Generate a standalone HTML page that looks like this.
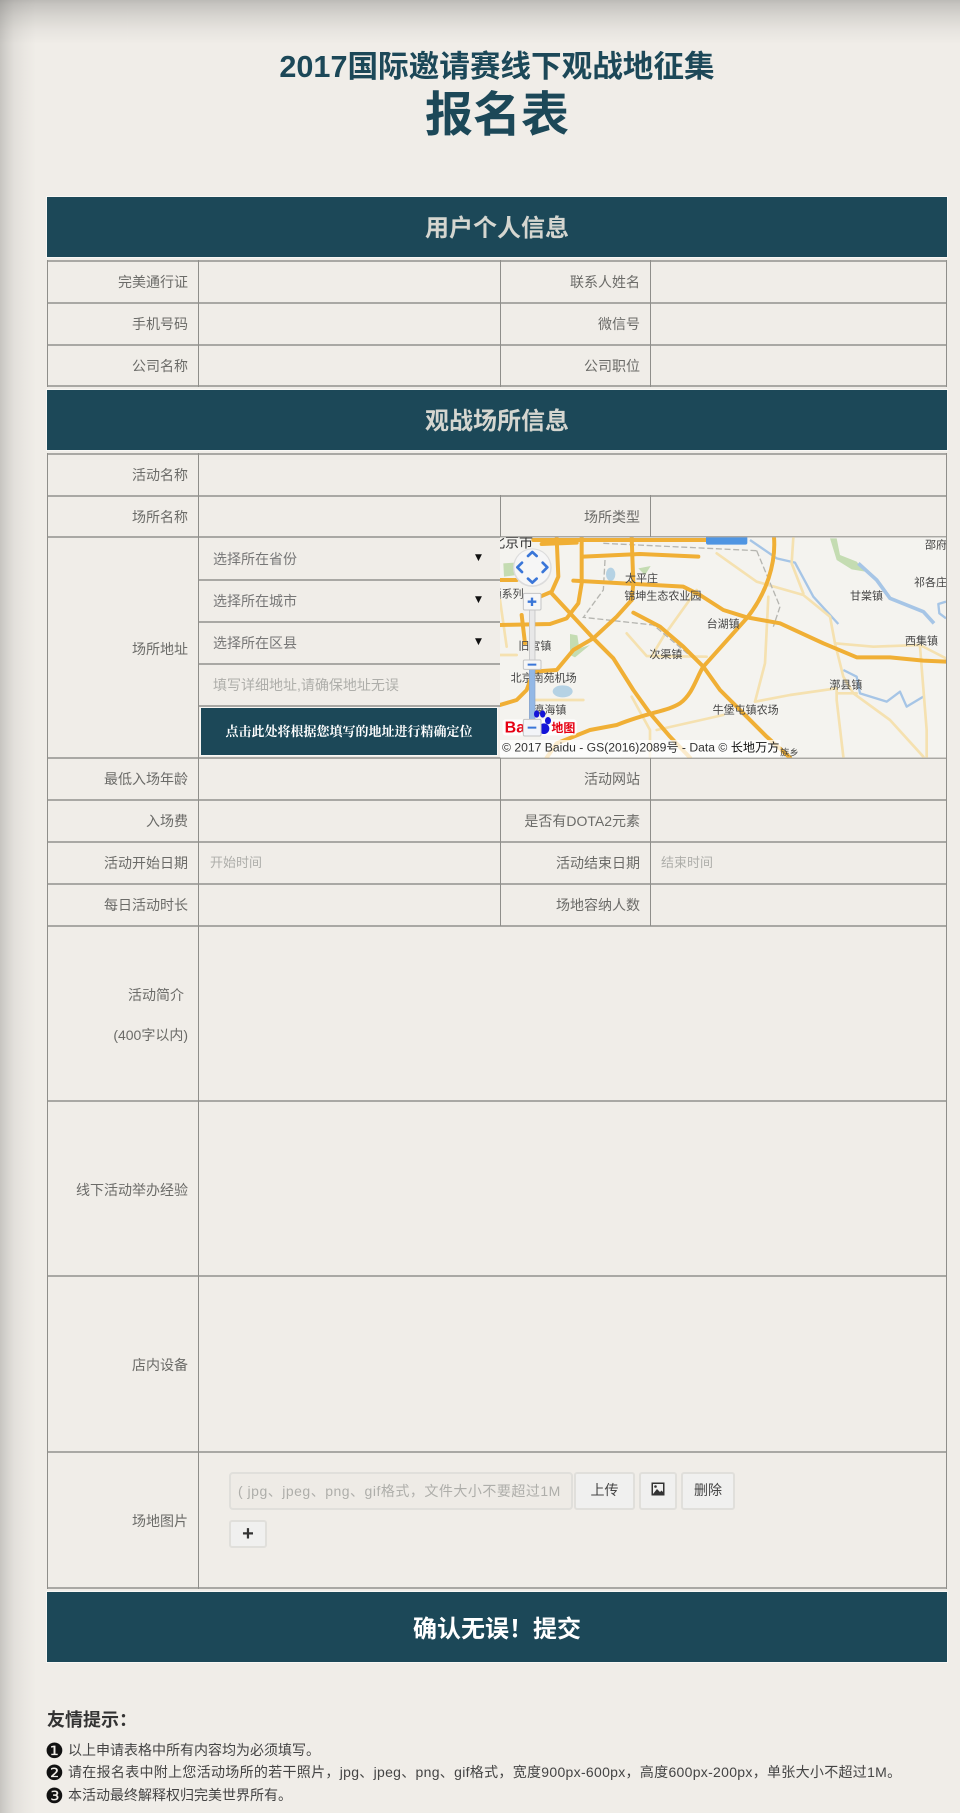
<!DOCTYPE html>
<html lang="zh-CN">
<head>
<meta charset="utf-8">
<title>报名表</title>
<style>
html,body{margin:0;padding:0;background:#f0ede8}
body{width:960px;height:1813px;position:relative;overflow:hidden;font-family:"Liberation Sans","Noto Sans CJK SC",sans-serif;color:#666}
#w{position:absolute;left:0;top:0;width:960px;height:1813px;overflow:hidden;background:#f0ede8;filter:blur(.35px)}
.shT{position:absolute;left:0;top:0;width:960px;height:44px;background:linear-gradient(rgba(110,110,108,.4) 0,rgba(110,110,108,.32) 4px,rgba(110,110,108,.19) 16px,rgba(110,110,108,.07) 30px,rgba(110,110,108,0) 44px)}
.shL{position:absolute;left:0;top:0;width:36px;height:1813px;background:linear-gradient(90deg,rgba(110,110,108,.32) 0,rgba(110,110,108,.22) 6px,rgba(110,110,108,.11) 14px,rgba(110,110,108,.05) 24px,rgba(110,110,108,0) 36px)}
.t{position:absolute;white-space:nowrap}
.bar{position:absolute;left:47px;width:900px;background:#1c4858;box-shadow:0 0 0 1px #f8f7f4;text-align:center;font-weight:bold}
.h{position:absolute;left:47px;width:900px;height:2px;background:#a9a8a4}
.hi{position:absolute;left:198px;width:302px;height:2px;background:#a9a8a4}
.v{position:absolute;width:1px;background:#8f8e8a}
.lb{position:absolute;height:20px;line-height:20px;font-size:14px;color:#6b6b68;text-align:right;white-space:nowrap}
.a{left:47px;width:141px}
.b{left:500px;width:140px}
.sel{position:absolute;left:213px;font-size:14px;line-height:20px;height:20px;color:#777;white-space:nowrap}
.ar{position:absolute;left:475px;font-size:9px;line-height:12px;color:#111;font-family:"DejaVu Sans",sans-serif}
.ph{position:absolute;font-size:13px;line-height:20px;color:#aeaeaa;white-space:nowrap}
.btn{position:absolute;box-sizing:border-box;background:#f0f0ef;border:2px solid #e0dfdb;border-radius:3px;text-align:center;font-size:14px;color:#444;line-height:33px}
.tip{position:absolute;left:68px;font-size:14px;line-height:20px;height:20px;color:#444;white-space:nowrap}
.n{position:absolute;left:45px;font-size:21px;line-height:20px;height:20px;color:#111;font-family:"DejaVu Sans",sans-serif}
svg text{font-family:"Liberation Sans","Noto Sans CJK SC",sans-serif}
</style>
</head>
<body>
<div id="w">
<div class="shT"></div>
<div class="shL"></div>

<div class="t" style="left:0;width:994px;top:47px;text-align:center;font-size:30.6px;line-height:40px;font-weight:bold;color:#1c4858">2017国际邀请赛线下观战地征集</div>
<div class="t" style="left:0;width:994px;top:86px;text-align:center;font-size:48px;line-height:60px;font-weight:bold;color:#1c4858">报名表</div>

<div class="bar" style="top:197px;height:60px;line-height:64px;font-size:24px;color:#d5d6d0">用户个人信息</div>

<div class="h" style="top:260px"></div>
<div class="h" style="top:302px"></div>
<div class="h" style="top:344px"></div>
<div class="h" style="top:385px"></div>
<div class="v" style="left:47px;top:260px;height:127px"></div>
<div class="v" style="left:198px;top:260px;height:127px"></div>
<div class="v" style="left:500px;top:260px;height:127px"></div>
<div class="v" style="left:650px;top:260px;height:127px"></div>
<div class="v" style="left:946px;top:260px;height:127px"></div>
<div class="lb a" style="top:272px">完美通行证</div>
<div class="lb b" style="top:272px">联系人姓名</div>
<div class="lb a" style="top:314px">手机号码</div>
<div class="lb b" style="top:314px">微信号</div>
<div class="lb a" style="top:356px">公司名称</div>
<div class="lb b" style="top:356px">公司职位</div>

<div class="bar" style="top:390px;height:60px;line-height:64px;font-size:24px;color:#d5d6d0">观战场所信息</div>

<div class="h" style="top:453px"></div>
<div class="h" style="top:495px"></div>
<div class="h" style="top:536px"></div>
<div class="hi" style="top:579px"></div>
<div class="hi" style="top:621px"></div>
<div class="hi" style="top:663px"></div>
<div class="hi" style="top:705px"></div>
<div class="h" style="top:757px"></div>
<div class="h" style="top:799px"></div>
<div class="h" style="top:841px"></div>
<div class="h" style="top:883px"></div>
<div class="h" style="top:925px"></div>
<div class="h" style="top:1100px"></div>
<div class="h" style="top:1275px"></div>
<div class="h" style="top:1451px"></div>
<div class="h" style="top:1587px"></div>
<div class="v" style="left:47px;top:453px;height:1136px"></div>
<div class="v" style="left:198px;top:453px;height:1136px"></div>
<div class="v" style="left:946px;top:453px;height:1136px"></div>
<div class="v" style="left:500px;top:495px;height:42px"></div>
<div class="v" style="left:650px;top:495px;height:42px"></div>
<div class="v" style="left:500px;top:757px;height:169px"></div>
<div class="v" style="left:650px;top:757px;height:169px"></div>

<div class="lb a" style="top:465px">活动名称</div>
<div class="lb a" style="top:507px">场所名称</div>
<div class="lb b" style="top:507px">场所类型</div>
<div class="lb a" style="top:639px">场所地址</div>

<div class="sel" style="top:549px">选择所在省份</div><div class="ar" style="top:552px">▼</div>
<div class="sel" style="top:591px">选择所在城市</div><div class="ar" style="top:594px">▼</div>
<div class="sel" style="top:633px">选择所在区县</div><div class="ar" style="top:636px">▼</div>
<div class="sel" style="top:675px;color:#aeaeaa">填写详细地址,请确保地址无误</div>

<div style="position:absolute;left:201px;top:708px;width:296px;height:47px;background:#1c4858;text-align:center;line-height:48px;font-size:13px;font-weight:bold;color:#fff;font-family:'Liberation Serif','Noto Serif CJK SC',serif;box-shadow:0 0 0 1px #f8f7f4">点击此处将根据您填写的地址进行精确定位</div>

<svg style="position:absolute;left:490px;top:530px" width="470" height="235" viewBox="0 0 1410 705">
<defs><clipPath id="c"><rect x="30" y="22" width="1338" height="661"/></clipPath></defs>
<g clip-path="url(#c)">
<rect x="30" y="22" width="1338" height="661" fill="#f4f3ef"/>
<g fill="#c4dcb2">
<path d="M1020 25 L1040 25 L1050 75 L1100 95 L1125 125 L1085 118 L1040 90 Z"/>
<path d="M240 312 L262 316 L268 355 L300 345 L255 382 L240 375 Z"/>
<path d="M445 115 L482 108 L465 135 Z"/>
<path d="M40 100 L75 98 L80 135 L42 140 Z"/>
</g>
<g fill="#b5d2e4">
<ellipse cx="362" cy="133" rx="14" ry="20"/>
<ellipse cx="218" cy="484" rx="30" ry="18"/>
</g>
<g fill="none" stroke="#a6c5e6" stroke-width="7" stroke-linejoin="round">
<path d="M780 30 L860 85 L915 98 L970 200 L1045 282"/>
<path d="M1105 100 L1160 150 L1200 205 L1300 245 L1332 280" stroke-width="11"/>
<path d="M1060 420 L1100 440 L1110 490 L1190 515 L1230 485 L1250 530 L1300 500"/>
<path d="M1368 265 L1348 250 L1345 222 L1368 215"/>
</g>
<g fill="none" stroke="#f5e1b0" stroke-width="8" stroke-linejoin="round" stroke-linecap="round">
<path d="M680 70 L800 155 L940 195 L1020 260 L1035 340 L1060 440 L1090 490 L1200 570 L1300 680"/>
<path d="M1035 340 L1150 350 L1290 345 L1368 385"/>
<path d="M1290 350 L1310 600 L1310 680"/>
<path d="M910 22 L905 100 L940 190"/>
<path d="M795 515 L825 400 L830 300 L835 200"/>
<path d="M795 515 L900 495 L1040 475 L1040 510 L1060 680"/>
<path d="M500 600 L700 555"/>
<path d="M620 180 L520 320 L490 370"/>
<path d="M410 310 L470 378 L650 380"/>
<path d="M130 510 L280 510"/>
<path d="M425 500 L480 600 L480 680"/>
<path d="M30 210 L50 350 M30 375 L80 375"/>
<path d="M1040 490 L1100 490"/>
</g>
<g fill="none" stroke="#b5b5b0" stroke-width="4" stroke-dasharray="18 8">
<path d="M340 40 L800 62"/>
<path d="M345 90 L340 180 L280 262 L490 285 L640 410"/>
<path d="M800 62 L870 230 L850 290"/>
</g>
<g fill="none" stroke="#f0af35" stroke-width="12" stroke-linejoin="round" stroke-linecap="round">
<path d="M852 22 C858 100 830 190 770 265 L640 410 C620 440 610 490 570 520 C530 545 480 545 380 585 L300 600 L200 640 L170 683"/>
<path d="M630 195 L700 240 L770 262 L870 280 L1000 340 L1100 382 L1200 382 L1300 392 L1368 395"/>
<path d="M185 190 L310 325 L370 385 L430 480 L480 550 L540 620 L600 683"/>
<path d="M430 248 L510 290 L580 350 L640 410 L690 480 L760 550 L830 620 L900 683"/>
<path d="M425 210 L380 260 L310 325 L250 360 L200 420 L130 425 L110 480 L80 510 L30 525"/>
<path d="M250 152 L400 160 L580 170 L630 195"/>
<path d="M275 22 L275 160 L265 220 L230 265 L180 282 L30 285"/>
<path d="M425 22 L430 160 L425 210"/>
<path d="M155 42 L260 38"/>
<path d="M200 25 L205 140 L185 185 L150 200"/>
<path d="M280 80 L450 72 L625 80"/>
<path d="M130 30 L650 30"/>
<path d="M95 255 L105 340"/>
<path d="M30 150 L80 150"/>
</g>
<rect x="648" y="10" width="124" height="34" rx="6" fill="#4f95e2"/>
<g fill="#444" font-size="33">
<text x="405" y="156">太平庄</text>
<text x="403" y="208">锦坤生态农业园</text>
<text x="650" y="292">台湖镇</text>
<text x="478" y="384">次渠镇</text>
<text x="85" y="358">旧宫镇</text>
<text x="62" y="454">北京南苑机场</text>
<text x="130" y="550">瀛海镇</text>
<text x="668" y="550">牛堡屯镇农场</text>
<text x="1018" y="476">漷县镇</text>
<text x="1245" y="343">西集镇</text>
<text x="1080" y="208">甘棠镇</text>
<text x="1272" y="168">祁各庄</text>
<text x="1305" y="55">邵府</text>
<text x="2" y="202">通系列</text>
<text x="870" y="676" font-size="28">族乡</text>
</g>
<text x="3" y="52" font-size="42" fill="#333">北京市</text>
<!-- nav -->
<circle cx="127" cy="113" r="58" fill="#dcdcdc"/>
<circle cx="127" cy="112" r="54" fill="#f6f6f6"/>
<g fill="none" stroke="#3a76d8" stroke-width="8" stroke-linecap="round" stroke-linejoin="round">
<path d="M114 78 L127 66 L140 78"/>
<path d="M114 146 L127 158 L140 146"/>
<path d="M96 98 L82 112 L96 126"/>
<path d="M158 98 L172 112 L158 126"/>
</g>
<rect x="118" y="238" width="17" height="155" fill="#e8e8e8" stroke="#bbb" stroke-width="2"/>
<rect x="118" y="415" width="17" height="155" fill="#93b8e6" stroke="#8aa4c8" stroke-width="2"/>
<!-- logo -->
<rect x="38" y="568" width="222" height="48" rx="8" fill="#fff" opacity=".8"/>
<text x="44" y="608" font-size="48" font-weight="bold" fill="#e60012">Ba</text>
<g fill="#1414d8">
<ellipse cx="140" cy="552" rx="8" ry="11"/><ellipse cx="158" cy="552" rx="8" ry="11"/>
<ellipse cx="174" cy="572" rx="9" ry="11"/><ellipse cx="162" cy="596" rx="16" ry="16"/>
</g>
<text x="184" y="606" font-size="36" font-weight="bold" fill="#e60012">地图</text>
<rect x="100" y="190" width="53" height="50" rx="4" fill="#f6f6f6" stroke="#c4c4c4" stroke-width="3"/>
<path d="M126 203 V228 M113 215 H139" stroke="#3a76d8" stroke-width="7" fill="none"/>
<rect x="100" y="390" width="53" height="28" rx="4" fill="#f6f6f6" stroke="#c4c4c4" stroke-width="3"/>
<path d="M113 404 H139" stroke="#3a76d8" stroke-width="6" fill="none"/>
<rect x="100" y="568" width="53" height="50" rx="4" fill="#f2f4f8" stroke="#c4c4c4" stroke-width="3"/>
<path d="M113 593 H139" stroke="#3a76d8" stroke-width="6" fill="none"/>
<!-- copyright -->
<rect x="30" y="630" width="842" height="53" fill="#fff" opacity=".75"/>
<text x="36" y="664" font-size="36.5" fill="#333">© 2017 Baidu - GS(2016)2089号 - Data © <tspan fill="#111">长地万方</tspan></text>
</g>
</svg>

<div class="lb a" style="top:769px">最低入场年龄</div>
<div class="lb b" style="top:769px">活动网站</div>
<div class="lb a" style="top:811px">入场费</div>
<div class="lb b" style="top:811px">是否有DOTA2元素</div>
<div class="lb a" style="top:853px">活动开始日期</div>
<div class="lb b" style="top:853px">活动结束日期</div>
<div class="ph" style="left:210px;top:853px">开始时间</div>
<div class="ph" style="left:661px;top:853px">结束时间</div>
<div class="lb a" style="top:895px">每日活动时长</div>
<div class="lb b" style="top:895px">场地容纳人数</div>

<div class="lb a" style="top:985px;width:137px">活动简介</div>
<div class="lb a" style="top:1025px">(400字以内)</div>
<div class="lb a" style="top:1180px">线下活动举办经验</div>
<div class="lb a" style="top:1355px">店内设备</div>
<div class="lb a" style="top:1511px">场地图片</div>

<div style="position:absolute;box-sizing:border-box;left:229px;top:1472px;width:344px;height:38px;background:#eeebe6;border:2px solid #e0dfdb;border-radius:4px;overflow:hidden;white-space:nowrap;font-size:14px;letter-spacing:.5px;line-height:34px;color:#aeaeaa;padding-left:7px">( jpg、jpeg、png、gif格式，文件大小不要超过1M</div>
<div class="btn" style="left:574px;top:1472px;width:61px;height:38px">上传</div>
<div class="btn" style="left:639px;top:1472px;width:38px;height:38px"><svg width="14" height="14" viewBox="0 0 14 14" style="margin-top:8px;display:block;margin-left:10px"><rect x="0.5" y="0.5" width="13" height="13" fill="#333"/><rect x="2" y="2" width="10" height="10" fill="#f0f0ef"/><path d="M2 12 L6 7 L9 10 L10.5 8.5 L12 10 V12 Z" fill="#333"/><circle cx="4.5" cy="4.5" r="1.3" fill="#333"/></svg></div>
<div class="btn" style="left:681px;top:1472px;width:54px;height:38px">删除</div>
<div class="btn" style="left:229px;top:1520px;width:38px;height:28px;line-height:24px;font-size:20px;font-weight:bold;color:#333">+</div>

<div class="bar" style="top:1592px;height:70px;line-height:76px;font-size:24px;color:#fff">确认无误！提交</div>

<div class="t" style="left:47px;top:1707px;font-size:18px;line-height:26px;font-weight:bold;color:#333">友情提示：</div>
<div class="n" style="top:1741px">❶</div>
<div class="tip" style="top:1740px">以上申请表格中所有内容均为必须填写。</div>
<div class="n" style="top:1763px">❷</div>
<div class="tip" style="top:1762px;letter-spacing:.3px">请在报名表中附上您活动场所的若干照片，jpg、jpeg、png、gif格式，宽度900px-600px，高度600px-200px，单张大小不超过1M。</div>
<div class="n" style="top:1786px">❸</div>
<div class="tip" style="top:1785px">本活动最终解释权归完美世界所有。</div>
</div>
</body>
</html>
